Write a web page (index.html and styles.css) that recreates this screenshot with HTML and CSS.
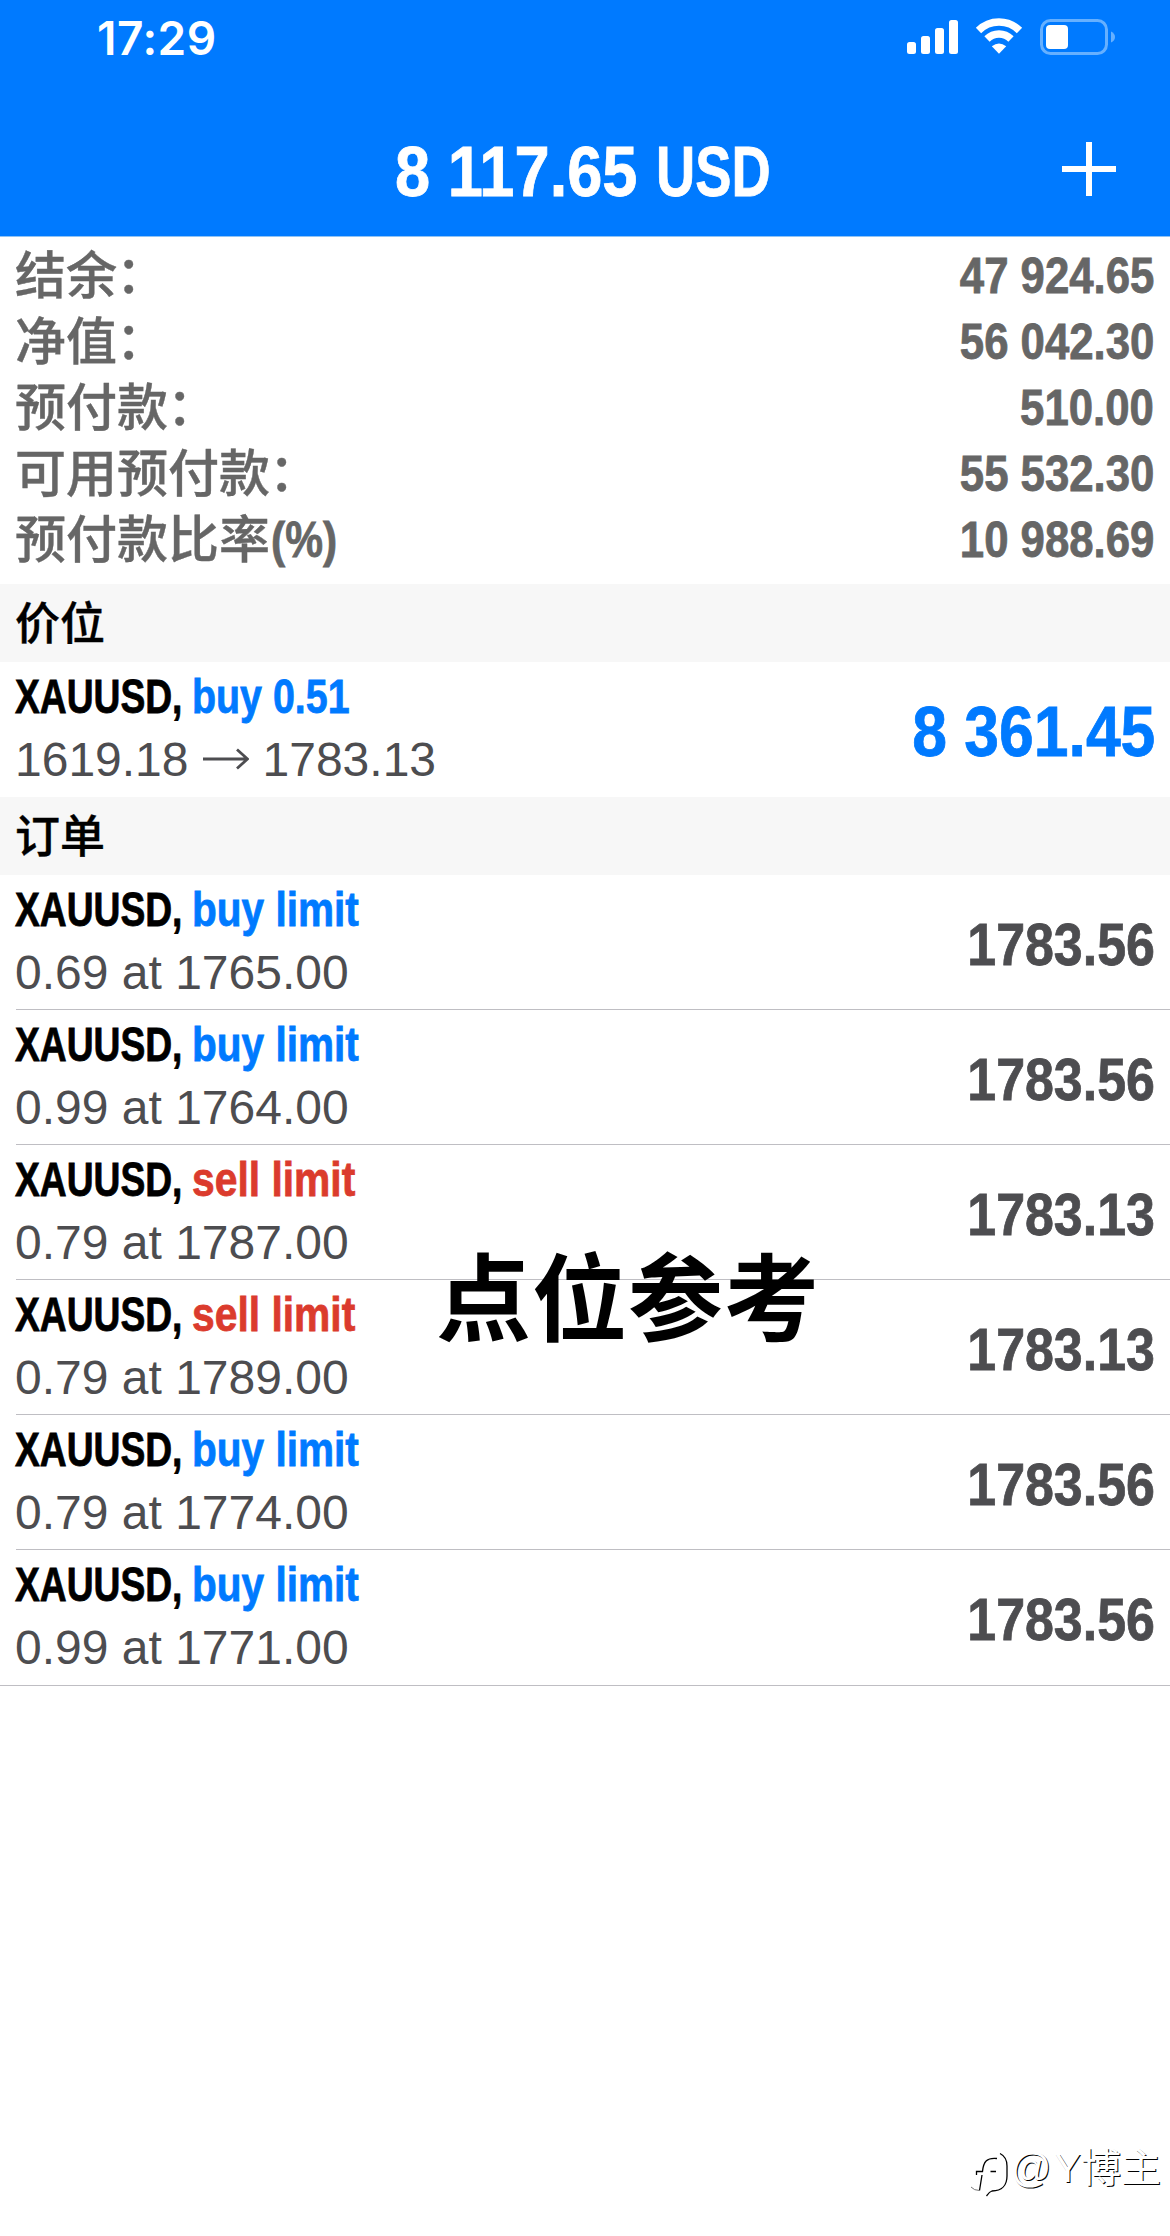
FILE: index.html
```
<!DOCTYPE html>
<html lang="zh-CN">
<head>
    <meta charset="UTF-8">
    <meta name="viewport" content="width=device-width, initial-scale=1.0">
    <title>8 117.65 USD</title>
    <link rel="stylesheet" href="styles.css">
</head>
<body>
    <header class="header">
        <div class="status-bar">
            <span class="time">17:29</span>
            <div class="status-icons">
                <svg class="signal" width="51" height="36" viewBox="0 0 51 36" fill="#fff">
                    <rect x="0" y="24" width="9" height="12" rx="2.5"/>
                    <rect x="14" y="18" width="9" height="18" rx="2.5"/>
                    <rect x="28" y="10" width="9" height="26" rx="2.5"/>
                    <rect x="42" y="2" width="9" height="34" rx="2.5"/>
                </svg>
                <svg class="wifi" width="48" height="36" viewBox="0 0 48 36">
                    <path d="M3.5 12.5A29 29 0 0 1 44.5 12.5M12 21A17 17 0 0 1 36 21" fill="none" stroke="#fff" stroke-width="7.5"/>
                    <path d="M16.8 28.2Q24 22.8 31.2 28.2L24 35.8Z" fill="#fff"/>
                </svg>
                <svg class="battery" width="76" height="36" viewBox="0 0 76 36">
                    <rect x="1.5" y="1.5" width="65" height="33" rx="9" fill="none" stroke="#66b0ff" stroke-width="3"/>
                    <rect x="6" y="6" width="22" height="24" rx="4" fill="#fff"/>
                    <path d="M71 12.5Q75 14.5 75 18Q75 21.5 71 23.5Z" fill="#66b0ff"/>
                </svg>
            </div>
        </div>
        <div class="nav-bar">
            <h1 class="profit"><span class="profit-amount">8 117.65</span><span class="profit-currency">USD</span></h1>
            <svg class="add" width="54" height="54" viewBox="0 0 54 54">
                <path d="M27 0V54M0 27H54" stroke="#fff" stroke-width="6"/>
            </svg>
        </div>
    </header>

    <section class="summary">
        <div class="summary-row"><span class="label">结余<span class="colon">：</span></span><span class="value">47 924.65</span></div>
        <div class="summary-row"><span class="label">净值<span class="colon">：</span></span><span class="value">56 042.30</span></div>
        <div class="summary-row"><span class="label">预付款<span class="colon">：</span></span><span class="value">510.00</span></div>
        <div class="summary-row"><span class="label">可用预付款<span class="colon">：</span></span><span class="value">55 532.30</span></div>
        <div class="summary-row"><span class="label">预付款比率</span><span class="percent">(%)</span><span class="value">10 988.69</span></div>
    </section>

    <h2 class="section-title">价位</h2>
    <div class="row position">
        <div class="info">
            <div class="name"><span class="symbol">XAUUSD,</span><span class="side volume buy">buy 0.51</span></div>
            <div class="detail">1619.18<svg class="arrow" width="46" height="22" viewBox="0 0 46 22"><path d="M0 11H44M34 1.5L44.5 11L34 20.5" fill="none" stroke="#4d4d50" stroke-width="2.8"/></svg>1783.13</div>
        </div>
        <span class="total">8 361.45</span>
    </div>

    <h2 class="section-title">订单</h2>
    <div class="orders">
        <div class="row">
            <div class="info">
                <div class="name"><span class="symbol">XAUUSD,</span><span class="side buy">buy limit</span></div>
                <div class="detail">0.69 at 1765.00</div>
            </div>
            <span class="price">1783.56</span>
        </div>
        <div class="row">
            <div class="info">
                <div class="name"><span class="symbol">XAUUSD,</span><span class="side buy">buy limit</span></div>
                <div class="detail">0.99 at 1764.00</div>
            </div>
            <span class="price">1783.56</span>
        </div>
        <div class="row">
            <div class="info">
                <div class="name"><span class="symbol">XAUUSD,</span><span class="side sell">sell limit</span></div>
                <div class="detail">0.79 at 1787.00</div>
            </div>
            <span class="price">1783.13</span>
        </div>
        <div class="row">
            <div class="info">
                <div class="name"><span class="symbol">XAUUSD,</span><span class="side sell">sell limit</span></div>
                <div class="detail">0.79 at 1789.00</div>
            </div>
            <span class="price">1783.13</span>
        </div>
        <div class="row">
            <div class="info">
                <div class="name"><span class="symbol">XAUUSD,</span><span class="side buy">buy limit</span></div>
                <div class="detail">0.79 at 1774.00</div>
            </div>
            <span class="price">1783.56</span>
        </div>
        <div class="row">
            <div class="info">
                <div class="name"><span class="symbol">XAUUSD,</span><span class="side buy">buy limit</span></div>
                <div class="detail">0.99 at 1771.00</div>
            </div>
            <span class="price">1783.56</span>
        </div>
    </div>

    <div class="caption">点位参考</div>

    <div class="watermark">
        <svg class="watermark-logo" width="40" height="46" viewBox="0 0 40 46" fill="none" stroke="#000">
            <path d="M27 7.5C17 6.5 13.5 10 12.5 20.5H6.5V24M12 24L9.5 39.5" stroke-width="1.3"/>
            <path d="M20.5 20.5H26" stroke-width="1.5"/>
            <path d="M30 2.5C35 5 37 9 37 15V25C37 34 32 40 22 40C19 41 18 43 16.5 45" stroke-width="1.3"/>
            <path d="M1 36Q4 39.5 9.5 39.5" stroke="#777" stroke-width="1"/>
        </svg>
        <span class="watermark-text"><span class="at">@</span>Y博主</span>
    </div>
</body>
</html>
```

FILE: styles.css
```
* {
    box-sizing: border-box;
}
body {
    position: relative;
    margin: 0;
    height: 2236px;
    overflow: hidden;
    background-color: #fff;
    font-family: "Liberation Sans", "Noto Sans CJK SC", sans-serif;
    color: #000;
}
h1, h2 {
    margin: 0;
}

/* header */
.header {
    height: 237px;
    background-color: #007aff;
    border-bottom: 1px solid #8fc3f5;
    color: #fff;
}
.status-bar {
    display: flex;
    justify-content: space-between;
    align-items: flex-start;
    height: 102px;
    padding: 18px 54px 0 97px;
}
.time {
    font-family: Inter, sans-serif;
    font-size: 46px;
    font-weight: 600;
    letter-spacing: 0.5px;
    line-height: 40px;
}
.status-icons {
    display: flex;
}
.wifi {
    margin-left: 17px;
}
.battery {
    margin: 1px 0 0 17px;
}
.nav-bar {
    display: grid;
    grid-template-columns: 1fr 376px 1fr;
    align-items: center;
    height: 134px;
    padding: 0 54px 0 50px;
}
.profit {
    display: flex;
    grid-column: 2;
    padding-top: 5px;
    font-size: 71px;
    line-height: 80px;
    white-space: nowrap;
}

/* condensed bold text: every box is as wide as its scaled text */
.profit-amount, .profit-currency, .percent, .symbol, .side {
    display: block;
    transform-origin: left;
    white-space: nowrap;
}
.profit, .percent, .value, .name, .price, .total {
    -webkit-text-stroke: 0.8px currentColor;
}
.profit-amount {
    width: 261px;
    transform: scaleX(0.89);
}
.profit-currency {
    width: 114px;
    transform: scaleX(0.765);
}
.add {
    justify-self: end;
}

/* account summary */
.summary {
    height: 347px;
    padding: 6px 16px 0 15px;
    color: #666;
}
.summary-row {
    display: flex;
    height: 66px;
    font-size: 50px;
    line-height: 66px;
}
.label {
    font-size: 51px;
    font-weight: 500;
    line-height: 67px;
    -webkit-text-stroke: 0.4px currentColor;
}
.colon {
    position: relative;
    top: -1px;
    left: -1px;
}
.percent {
    width: 66px;
    margin-left: 1px;
    font-weight: bold;
    transform: scaleX(0.85);
}
.value {
    margin-left: auto;
    font-weight: bold;
    transform: scaleX(0.875);
    transform-origin: right;
}

.section-title {
    height: 78px;
    padding-left: 15px;
    background-color: #f7f7f7;
    font-size: 45px;
    font-weight: 500;
    line-height: 82px;
    -webkit-text-stroke: 0.4px currentColor;
}

/* positions and orders */
.row {
    display: flex;
    justify-content: space-between;
    align-items: center;
    height: 135px;
    margin-left: 16px;
    padding: 4px 15px 0 0;
    border-bottom: 1px solid #bfbec3;
}
.position {
    border-bottom: none;
}
.orders .row:last-child {
    height: 136px;
    margin-left: 0;
    padding-left: 16px;
}
.info {
    align-self: flex-start;
    margin-left: -1px;
    font-size: 48px;
}
.name {
    display: flex;
    font-weight: bold;
    line-height: 62px;
}
.symbol {
    width: 177px;
    transform: scaleX(0.775);
}
.side {
    transform: scaleX(0.845);
}
.sell {
    color: #db3b2d;
    transform: scaleX(0.85);
}
.volume {
    transform: scaleX(0.82);
}
.buy {
    color: #007aff;
}
.detail {
    color: #4d4d50;
    line-height: 63px;
    white-space: nowrap;
}
.arrow {
    margin: 0 14px;
    vertical-align: 6px;
}
.price, .total {
    font-weight: bold;
    transform-origin: right;
}
.price {
    font-size: 60px;
    color: #4d4d50;
    transform: scaleX(0.865);
}
.total {
    font-size: 71px;
    color: #007aff;
    transform: scaleX(0.88);
}

/* text laid over the list */
.caption {
    position: absolute;
    left: 436px;
    top: 1238px;
    font-family: "Noto Sans CJK SC", sans-serif;
    font-size: 95px;
    font-weight: 700;
    letter-spacing: 1px;
    line-height: 110px;
}
.watermark {
    position: absolute;
    right: 9px;
    top: 2141px;
    display: flex;
}
.watermark-logo {
    margin: 10px 4px 0 0;
}
.watermark-text {
    font-size: 40px;
    line-height: 54px;
    color: #fff;
    text-shadow: 1px 1px 0 #000;
}
.at {
    margin: 0 3px 0 -3px;
}
```
